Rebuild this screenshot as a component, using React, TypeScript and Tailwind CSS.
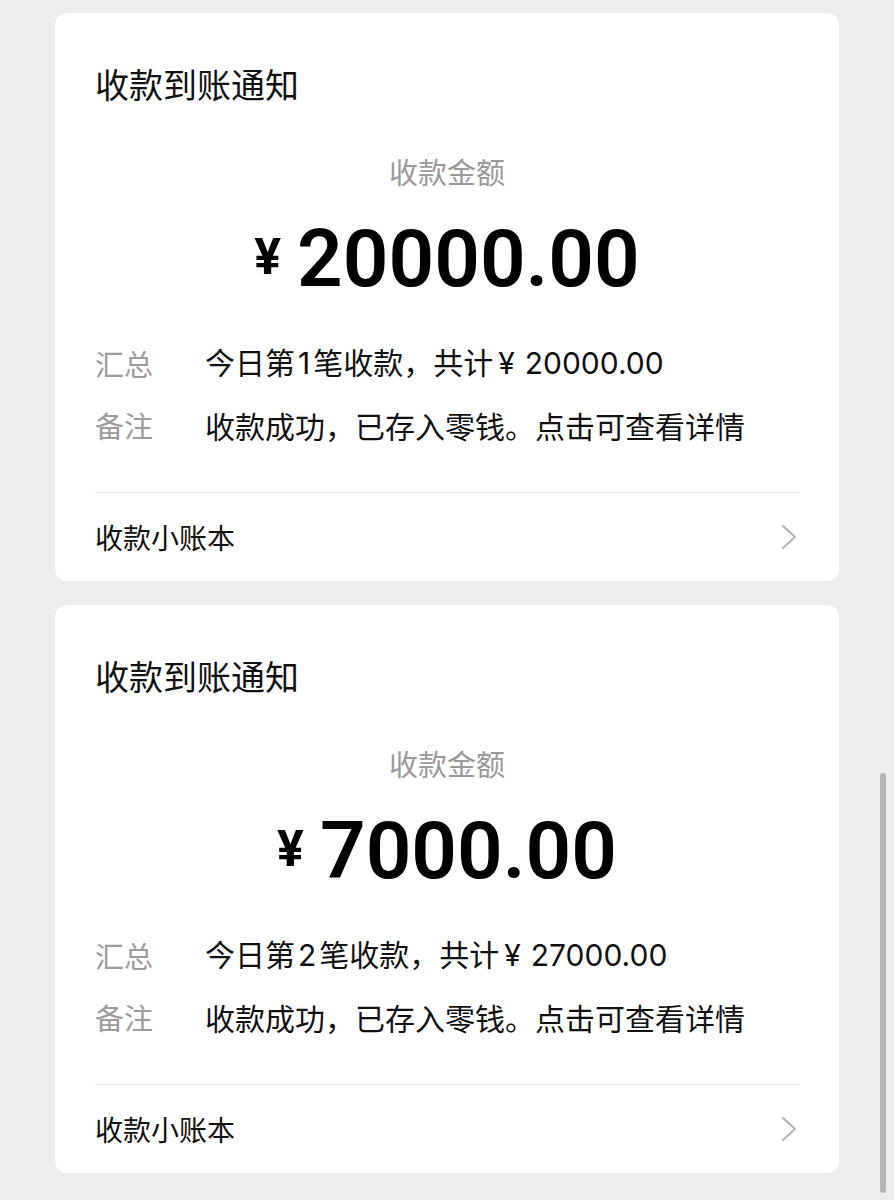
import React from "react";

type Receipt = {
  amount: string;
  index: number;
  total: string;
};

const receipts: Receipt[] = [
  { amount: "20000.00", index: 1, total: "20000.00" },
  { amount: "7000.00", index: 2, total: "27000.00" },
];

const cjk = { fontFamily: '"Noto Sans CJK SC", "Noto Sans", sans-serif' };
const mixed = { fontFamily: 'Inter, "Noto Sans CJK SC", sans-serif' };
const num = { fontFamily: 'Roboto, "Noto Sans", sans-serif' };

function Chevron() {
  return (
    <svg width="16" height="26" viewBox="0 0 16 26" fill="none">
      <path d="M2 2 L14 13 L2 24" stroke="#b3b3b3" strokeWidth="2" strokeLinecap="round" strokeLinejoin="round" />
    </svg>
  );
}

function ReceiptCard({ r }: { r: Receipt }) {
  return (
    <div className="bg-white rounded-[12px] px-[40px] pt-[49px]" style={cjk}>
      <div className="text-[34px] leading-[44px] text-[#111]">收款到账通知</div>

      <div className="mt-[45px] text-center text-[29px] leading-[40px] text-[#999]">收款金额</div>

      <div className="mt-[20px] h-[96px] flex items-center justify-center gap-[16px] text-black" style={num}>
        <span className="text-[50px] font-bold leading-none mt-[-4px]">¥</span>
        <span className="text-[80px] font-semibold leading-none">{r.amount}</span>
      </div>

      <div className="mt-[34px] flex flex-col gap-[18px] text-[30px] leading-[44px]">
        <div className="flex">
          <span className="w-[110px] text-[29px] text-[#9c9c9c]">汇总</span>
          <span className="text-[#111]" style={mixed}>
            今日第<span className="mx-[3px]">{r.index}</span>笔收款，共计
            <span className="ml-[5px] mr-[10px]">¥</span>
            {r.total}
          </span>
        </div>
        <div className="flex">
          <span className="w-[110px] text-[29px] text-[#9c9c9c]">备注</span>
          <span className="text-[#111]">收款成功，已存入零钱。点击可查看详情</span>
        </div>
      </div>

      <div className="mt-[45px] border-t border-[#e6e6e6] h-[89px] flex items-center justify-between">
        <span className="text-[28px] text-[#111]">收款小账本</span>
        <span className="mr-[2px]">
          <Chevron />
        </span>
      </div>
    </div>
  );
}

export default function App() {
  return (
    <div className="relative h-[1200px] overflow-hidden bg-[#ededed] pt-[13px] pl-[55px] pr-[55px]">
      <div className="flex flex-col gap-[24px]">
        {receipts.map((r) => (
          <ReceiptCard key={r.index} r={r} />
        ))}
      </div>
      {/* scroll indicator */}
      <div className="absolute right-[8px] top-[773px] h-[420px] w-[6px] rounded-full bg-[#b5b5b5]" />
    </div>
  );
}
